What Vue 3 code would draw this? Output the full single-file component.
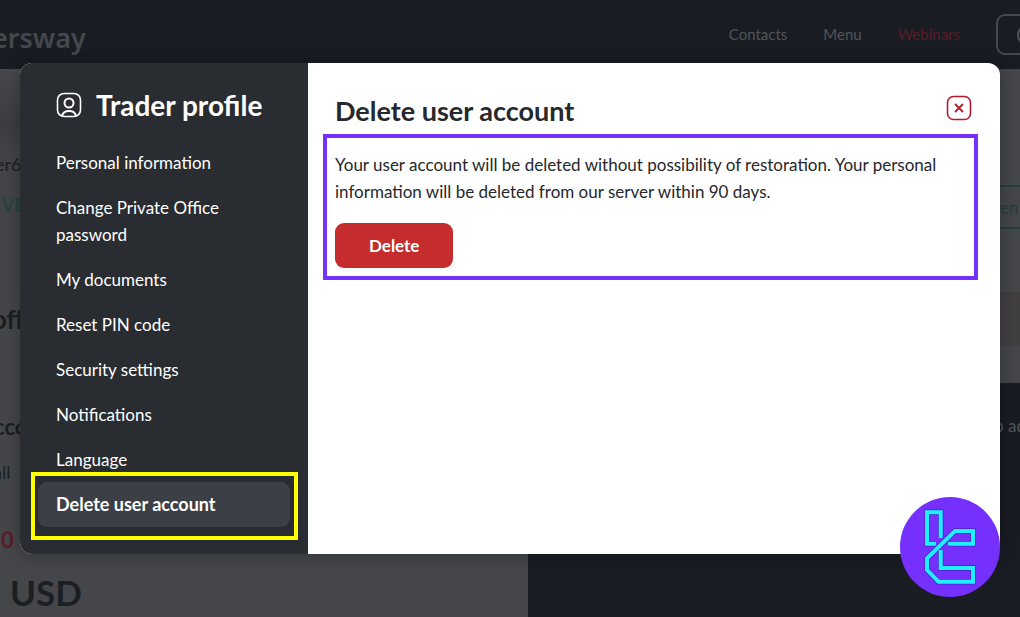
<script setup>
const items = [
  'Personal information',
  'Change Private Office password',
  'My documents',
  'Reset PIN code',
  'Security settings',
  'Notifications',
  'Language',
  'Delete user account',
]
const current = 'Delete user account'
</script>

<template>
  <div class="page">
    <header class="topbar">
      <a class="brand" href="#">ersway</a>
      <nav class="links" aria-label="Site">
        <a href="#">Contacts</a>
        <a href="#">Menu</a>
        <a href="#" class="hot">Webinars</a>
        <button class="account" type="button" aria-label="Account">
          <svg viewBox="0 0 24 24" width="24" height="24" fill="none" stroke="currentColor" stroke-width="2">
            <circle cx="12" cy="12" r="10" />
          </svg>
        </button>
      </nav>
    </header>

    <section class="hero">
      <div class="summary">
        <p class="login">er6</p>
        <p class="verified">VE</p>
        <p class="offers">off</p>
      </div>
      <div class="aside">
        <button class="open" type="button">en</button>
        <div class="band"></div>
      </div>
    </section>

    <section class="accounts">
      <div class="card">
        <p class="card-title">cco</p>
        <p class="filter">all</p>
        <p class="count">0</p>
        <p class="currency">USD</p>
      </div>
      <p class="add">o ad</p>
    </section>

    <div class="modal" role="dialog" aria-labelledby="dialog-title">
      <aside class="sidebar">
        <h2 class="profile">
          <svg viewBox="0 0 26 26" width="26" height="26" fill="none" stroke="currentColor" stroke-width="1.6">
            <rect x="1.5" y="1.5" width="23" height="23" rx="6.5" />
            <circle cx="13" cy="11" r="4.5" stroke-width="2" />
            <path d="M6 24C7.5 17.2 18.5 17.2 20 24" stroke-width="2" />
          </svg>
          <span>Trader profile</span>
        </h2>
        <nav class="menu" aria-label="Trader profile">
          <a v-for="item in items" :key="item" href="#" :class="{ active: item === current }">{{ item }}</a>
        </nav>
      </aside>
      <main class="content">
        <div class="title-row">
          <h1 id="dialog-title">Delete user account</h1>
          <button class="close" type="button" aria-label="Close">
            <svg viewBox="0 0 26 26" width="26" height="26" fill="none" stroke="currentColor" stroke-width="1.6">
              <rect x="1.5" y="1.5" width="23" height="23" rx="6" />
              <path d="M9 9L17 17M17 9L9 17" stroke-width="1.8" />
            </svg>
          </button>
        </div>
        <div class="notice">
          <p>
            Your user account will be deleted without possibility of restoration. Your personal
            information will be deleted from our server within 90 days.
          </p>
          <button class="delete" type="button">Delete</button>
        </div>
      </main>
    </div>

    <svg class="badge" viewBox="0 0 100 100" width="100" height="100" aria-hidden="true">
      <circle cx="50" cy="50" r="50" fill="#7530fd" />
      <g fill="none" stroke="#4a25c8" stroke-width="5.5">
        <path d="M36 46.7H27V15.3H40.7V41" />
        <path d="M48 46.7H73V34H55L27 61.3V73L38.5 84.7H73V71H40.7V53" />
      </g>
      <g fill="none" stroke="#20efff" stroke-width="4">
        <path d="M36 46.7H27V15.3H40.7V41" />
        <path d="M48 46.7H73V34H55L27 61.3V73L38.5 84.7H73V71H40.7V53" />
      </g>
    </svg>
  </div>
</template>

<style>
body {
  margin: 0;
  background: #191c23;
}
</style>

<style scoped>
.page {
  position: relative;
  display: flex;
  flex-direction: column;
  min-height: 100vh;
  overflow: hidden;
  background: #191c23;
  color: #1b1e23;
  font-family: Lato, "Open Sans", sans-serif;
  font-size: 17px;
  line-height: 27px;
}
p, h1, h2 { margin: 0; }
a { color: inherit; text-decoration: none; }
button { font: inherit; cursor: pointer; }
svg { display: block; flex: none; }

.topbar {
  display: flex;
  align-items: center;
  justify-content: space-between;
  height: 69px;
  color: #515458;
}
.brand {
  margin-left: -8px;
  padding-top: 6px;
  font-family: "Noto Sans", sans-serif;
  font-size: 27px;
  font-weight: 600;
  line-height: 36px;
  color: #45484c;
}
.links {
  display: flex;
  align-items: center;
  gap: 36px;
  margin-right: -36px;
  font-size: 15px;
}
.hot { color: #591d27; }
.account {
  width: 60px;
  height: 41px;
  padding: 0 18px;
  border: 2px solid #45484c;
  border-radius: 9px;
  background: none;
  color: #515458;
}

.hero {
  display: flex;
  justify-content: space-between;
  height: 314px;
  background: linear-gradient(#48494c 0, #3c3d40 56px, #434447 84px, #45464a 100%);
}
.summary { padding-top: 82px; white-space: nowrap; }
.login { margin-left: -5px; font-size: 18px; }
.verified { margin: 14px 0 0 2px; font-size: 18px; font-weight: 700; color: #244640; }
.offers { margin: 87px 0 0 -8px; font-size: 26px; font-weight: 700; }
.aside { width: 20px; padding-top: 116px; background: #45464a; }
.open {
  display: block;
  width: 40px;
  height: 44px;
  padding: 0;
  border: solid #263e3c;
  border-width: 2px 0;
  background: none;
  color: #263e3c;
  text-align: left;
}
.band { height: 54px; margin-top: 63px; background: #413f42; }

.accounts { display: flex; flex: 1; justify-content: space-between; }
.card {
  width: 528px;
  padding-top: 30px;
  background: #45464a;
}
.card-title { margin-left: -6px; font-size: 22px; font-weight: 700; }
.filter { margin: 19px 0 0 -7px; font-size: 18px; }
.count { margin: 40px 0 0 1px; font-size: 22px; font-weight: 700; color: #591d27; }
.currency { margin: 17px 0 0 10px; font-size: 35px; font-weight: 700; line-height: 45px; }
.add { width: 26px; padding-top: 29px; color: #515458; white-space: nowrap; }

.modal {
  position: absolute;
  top: 63px;
  right: 20px;
  left: 20px;
  display: flex;
  overflow: hidden;
  border-radius: 12px;
  background: #fff;
  box-shadow: 0 0 18px rgba(0, 0, 0, 0.3);
}
.sidebar {
  box-sizing: border-box;
  flex: none;
  width: 288px;
  padding: 22px 18px 27px;
  background: #292c31;
  color: #fff;
}
.profile {
  display: flex;
  align-items: center;
  gap: 14px;
  margin: 0 18px 15px;
  font-size: 28px;
  font-weight: 700;
  line-height: 40px;
}
.menu { display: flex; flex-direction: column; }
.menu a {
  position: relative;
  padding: 9px 18px;
  border-radius: 9px;
}
.menu .active { background: #3c3f45; font-size: 18px; font-weight: 700; }
.menu .active::after {
  content: "";
  position: absolute;
  inset: -10px -8px -13px -7px;
  border: 4px solid #ff0;
}

.content { flex: 1; padding: 30px 22px 22px 15px; }
.title-row {
  display: flex;
  align-items: flex-start;
  justify-content: space-between;
  padding: 0 6px 5px 12px;
}
h1 { font-size: 27px; font-weight: 700; line-height: 36px; color: #25282c; }
.close { margin-top: 2px; padding: 0; border: 0; background: none; color: #b01c2e; }
.notice {
  padding: 13px 8px 8px;
  border: 4px solid #7530fd;
  color: #25282c;
}
.delete {
  height: 45px;
  margin-top: 18px;
  padding: 0 34px;
  border: 0;
  border-radius: 9px;
  background: #c42c2e;
  color: #fff;
  font-weight: 700;
}
.badge { position: absolute; right: 20px; bottom: 20px; }
</style>
